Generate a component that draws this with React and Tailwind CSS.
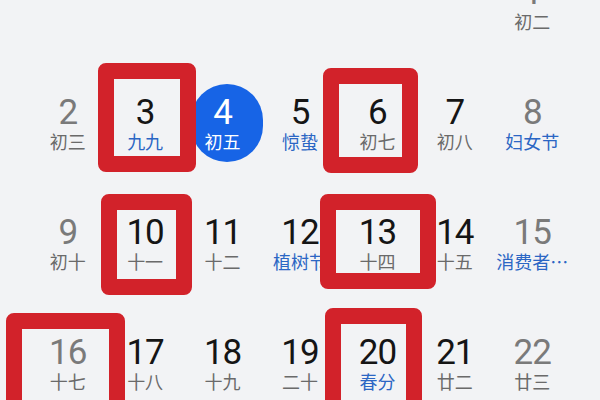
const weeks = [
  [null, null, null, null, null, null, { d: 1, l: "初二", w: true }],
  [
    { d: 2, l: "初三", w: true },
    { d: 3, l: "九九", f: true, box: "left-[-8px] top-[3px] w-[98px] h-[109px]" },
    { d: 4, l: "初五", today: true },
    { d: 5, l: "惊蛰", f: true },
    { d: 6, l: "初七", box: "left-[-16px] top-[8px] w-[95px] h-[105px]" },
    { d: 7, l: "初八" },
    { d: 8, l: "妇女节", f: true, w: true },
  ],
  [
    { d: 9, l: "初十", w: true },
    { d: 10, l: "十一", box: "left-[-5px] top-[14px] w-[91px] h-[101px]" },
    { d: 11, l: "十二" },
    { d: 12, l: "植树节", f: true },
    { d: 13, l: "十四", box: "left-[-19px] top-[14px] w-[116px] h-[95px]" },
    { d: 14, l: "十五" },
    { d: 15, l: "消费者…", f: true, w: true },
  ],
  [
    { d: 16, l: "十七", w: true, box: "left-[-23px] top-[13px] w-[119px] h-[112px]" },
    { d: 17, l: "十八" },
    { d: 18, l: "十九" },
    { d: 19, l: "二十" },
    { d: 20, l: "春分", f: true, box: "left-[-14px] top-[8px] w-[97px] h-[112px]" },
    { d: 21, l: "廿二" },
    { d: 22, l: "廿三", w: true },
  ],
];

function Day({ day }) {
  if (!day) return <div className="h-[120px]" />;

  const numColor = day.today ? "text-white" : day.w ? "text-[#7a7a7a]" : "text-[#151515]";
  const lunarColor = day.today ? "text-white" : day.f ? "text-[#2b66c4]" : "text-[#6a6a6a]";

  return (
    <div className="relative h-[120px] flex flex-col items-center pt-[35px]">
      {day.today && (
        <div className="absolute left-1/2 top-[24px] -translate-x-1/2 ml-[4px] w-[72px] h-[78px] rounded-full bg-[#1764e6]" />
      )}
      <div
        className={`relative font-['Roboto',sans-serif] text-[35px] leading-[36px] tracking-[-1px] whitespace-nowrap ${numColor}`}
      >
        {day.d}
      </div>
      <div
        className={`relative font-['Noto_Sans_CJK_SC','Noto_Sans',sans-serif] text-[18px] leading-[20px] whitespace-nowrap ${lunarColor}`}
      >
        {day.l}
      </div>
      {day.box && (
        <div className={`absolute z-10 border-[16px] border-[#d2222a] rounded-[8px] ${day.box}`} />
      )}
    </div>
  );
}

export default function App() {
  return (
    <div className="w-[600px] h-[400px] overflow-hidden bg-[#f2f3f5]">
      <div className="-mt-[60px] px-[29px]">
        {weeks.map((week, i) => (
          <div key={i} className="grid grid-cols-7">
            {week.map((day, j) => (
              <Day key={j} day={day} />
            ))}
          </div>
        ))}
      </div>
    </div>
  );
}
